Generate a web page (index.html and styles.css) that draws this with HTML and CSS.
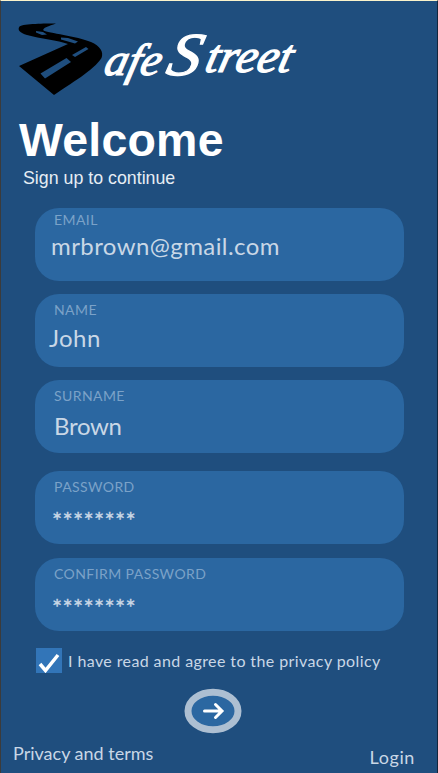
FILE: index.html
```
<!DOCTYPE html>
<html lang="en">
<head>
<meta charset="utf-8">
<title>SafeStreet – Sign up</title>
<link rel="stylesheet" href="styles.css">
</head>
<body>
<main class="screen">
  <header class="brand">
    <svg class="logo" viewBox="0 0 300 100" role="img" aria-label="SafeStreet">
      <path d="M56 23.500C45 23.500 24 23.500 19.500 26.500C17 30 20 33 27 35C40 39 58 40 68 44L19 66L54 95C70 84 94 70 101.500 58C104 52 100 46 91 42C77 36 48 33 43.500 30.500C42 28 49 26 56 23.500Z"/>
      <path class="lane" d="M36 31L43 32L47 34.500L42 35L36 32.500ZM61 37.500L68 38L78 41.500L75 43.500L61 39.500ZM86 47L88.500 49L75 57L72 55ZM66.500 58L71 62L45 78.500L40.500 73.500Z"/>
      <g class="script" transform="translate(0 73) skewX(-14)">
        <text x="103" y="2" font-size="45" textLength="56" lengthAdjust="spacingAndGlyphs">afe</text>
        <text x="165" y="2" font-size="61" textLength="33" lengthAdjust="spacingAndGlyphs">S</text>
        <text x="203" y="-1" font-size="47" textLength="86" lengthAdjust="spacingAndGlyphs">treet</text>
      </g>
    </svg>
  </header>
  <h1 class="title">Welcome</h1>
  <p class="subtitle">Sign up to continue</p>
  <form class="form">
    <div class="field email"><span class="label">EMAIL</span><span class="value">mrbrown@gmail.com</span></div>
    <div class="field name"><span class="label">NAME</span><span class="value">John</span></div>
    <div class="field surname"><span class="label">SURNAME</span><span class="value">Brown</span></div>
    <div class="field password"><span class="label">PASSWORD</span><span class="value">********</span></div>
    <div class="field password confirm"><span class="label">CONFIRM PASSWORD</span><span class="value">********</span></div>
  </form>
  <div class="agree">
    <svg class="check" viewBox="0 0 26 25"><path d="M4 16L9.500 22.500L22 7"/></svg>
    <span>I have read and agree to the privacy policy</span>
  </div>
  <svg class="next" viewBox="0 0 58 46">
    <ellipse cx="29" cy="23" rx="25" ry="18.700"/>
    <path d="M20.500 23H37M31.500 16.500L38 23L31.500 29.500"/>
  </svg>
  <footer class="footer"><span>Privacy and terms</span><span class="login">Login</span></footer>
</main>
</body>
</html>
```
FILE: styles.css
```
* { box-sizing: border-box; }
body { margin: 0; background: #1f4e7e; }
.screen {
  display: flex;
  flex-direction: column;
  width: 438px;
  height: 773px;
  overflow: hidden;
  border-top: 1px solid #fbf3cb;
  border-left: 1px solid #3b3b3b;
  border-right: 1px solid #12263c;
  background: #1f4e7e;
  color: #c9d7e6;
  font-family: Lato, "Liberation Sans", sans-serif;
  white-space: nowrap;
}
.brand { height: 100px; margin: -1px 0 0 -1px; }
.logo { display: block; width: 300px; height: 100px; }
.lane { fill: #1f4e7e; }
.script {
  fill: #fff;
  stroke: #fff;
  stroke-width: 1.200;
  font-family: "Liberation Serif", serif;
  font-style: italic;
  font-weight: 400;
}
.title {
  margin: 14px 0 0 18px;
  font: 700 46.500px/52px "Liberation Sans", sans-serif;
  letter-spacing: .2px;
  color: #fff;
}
.subtitle {
  margin: 1px 0 0 22px;
  font: 17.800px/22px "Liberation Sans", sans-serif;
  color: #e6edf4;
}
.form { display: flex; flex-direction: column; margin: 19px 33px 0 34px; }
.field {
  display: flex;
  flex-direction: column;
  height: 73px;
  padding: 3px 0 0 19px;
  border-radius: 24px;
  background: #2b67a1;
}
.label { font-size: 14px; line-height: 18px; letter-spacing: .42px; color: #7ba2c8; }
.value { margin-top: 4px; font-size: 24px; line-height: 29px; }
.email .value { margin-left: -3px; margin-top: 2px; letter-spacing: .42px; }
.name { margin-top: 13px; padding-top: 7px; }
.name .value { margin-left: -5px; letter-spacing: .4px; }
.surname { margin-top: 13px; padding-top: 7px; }
.surname .value { margin-top: 6px; letter-spacing: -.3px; }
.password { margin-top: 18px; padding-top: 7px; }
.password .value { margin-left: -2px; margin-top: 9px; letter-spacing: .3px; -webkit-text-stroke: .4px; }
.confirm { margin-top: 14px; }
.agree { display: flex; margin: 17px 0 0 35px; font-size: 16px; line-height: 26px; letter-spacing: .4px; }
.agree span { margin-left: 6px; }
.check { width: 26px; height: 25px; background: #3275b8; }
.check path { fill: none; stroke: #fff; stroke-width: 3.500; }
.next { width: 58px; height: 46px; margin: 14px 0 0 183px; flex: none; }
.next ellipse { fill: #2b67a1; stroke: #adbfd2; stroke-width: 7; }
.next path { fill: none; stroke: #fff; stroke-width: 3; stroke-linecap: round; }
.footer { display: flex; justify-content: space-between; margin: 7px 22px 0 12px; font-size: 18px; line-height: 24px; }
.login { margin-top: 4px; letter-spacing: .6px; }
```
